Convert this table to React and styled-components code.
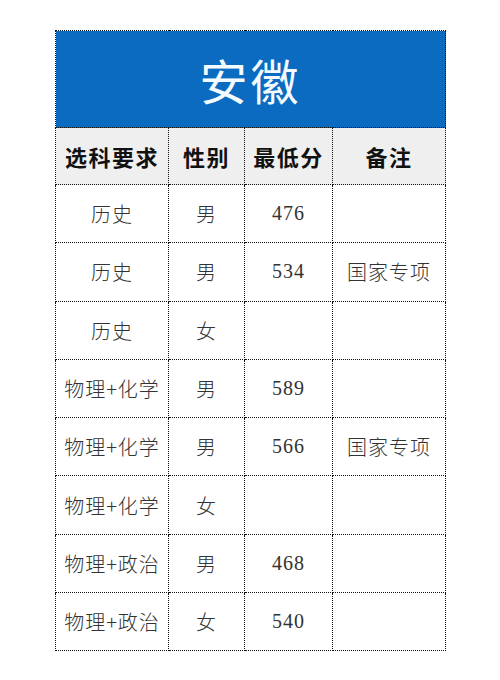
import React from 'react';
import styled, { createGlobalStyle } from 'styled-components';

const GlobalStyle = createGlobalStyle`
	html, body {
		margin: 0;
		padding: 0;
		background: #fff;
	}
	body {
		font-family: 'Liberation Serif', 'Noto Sans CJK SC', serif;
	}
`;

const Page = styled.div`
	width: 500px;
	height: 680px;
	padding: 30px 0 0 55px;
	box-sizing: border-box;
`;

const Table = styled.table`
	border-collapse: collapse;
	table-layout: fixed;
	width: 390px;
`;

const TitleCell = styled.th`
	height: 96px;
	background-color: #0b6bc1;
	color: #f4fbff;
	font-family: 'Noto Sans CJK SC', sans-serif;
	font-weight: 400;
	font-size: 48px;
	letter-spacing: 3px;
	border: 1px dotted #111;
	padding: 0;
`;

const HeadCell = styled.th`
	height: 56px;
	background-color: #efefef;
	color: #111;
	font-family: 'Noto Sans CJK SC', sans-serif;
	font-weight: 700;
	font-size: 22px;
	letter-spacing: 1.5px;
	border: 1px dotted #111;
	padding: 0;
	text-align: center;
	white-space: nowrap;
`;

const Cell = styled.td`
	height: 57.3px;
	color: #333;
	font-family: ${props => (props.isNum ? "'Liberation Serif', serif" : "'Noto Sans CJK SC', sans-serif")};
	font-weight: 300;
	font-size: 20px;
	letter-spacing: 1px;
	border: 1px dotted #111;
	padding: 0;
	text-align: center;
	white-space: nowrap;
`;

const columns = [
	{ label: '选科要求', width: 113 },
	{ label: '性别', width: 76 },
	{ label: '最低分', width: 88 },
	{ label: '备注', width: 113 },
];

const rows = [
	['历史', '男', '476', ''],
	['历史', '男', '534', '国家专项'],
	['历史', '女', '', ''],
	['物理+化学', '男', '589', ''],
	['物理+化学', '男', '566', '国家专项'],
	['物理+化学', '女', '', ''],
	['物理+政治', '男', '468', ''],
	['物理+政治', '女', '540', ''],
];

function App() {
	return (
		<Page>
			<GlobalStyle />
			<Table>
				<colgroup>
					{columns.map(col => (
						<col key={col.label} style={{ width: col.width }} />
					))}
				</colgroup>
				<thead>
					<tr>
						<TitleCell colSpan={4}>安徽</TitleCell>
					</tr>
					<tr>
						{columns.map(col => (
							<HeadCell key={col.label}>{col.label}</HeadCell>
						))}
					</tr>
				</thead>
				<tbody>
					{rows.map((row, idx) => (
						<tr key={idx}>
							{row.map((value, i) => (
								<Cell key={i} isNum={i === 2}>
									{value}
								</Cell>
							))}
						</tr>
					))}
				</tbody>
			</Table>
		</Page>
	);
}

export default App;
